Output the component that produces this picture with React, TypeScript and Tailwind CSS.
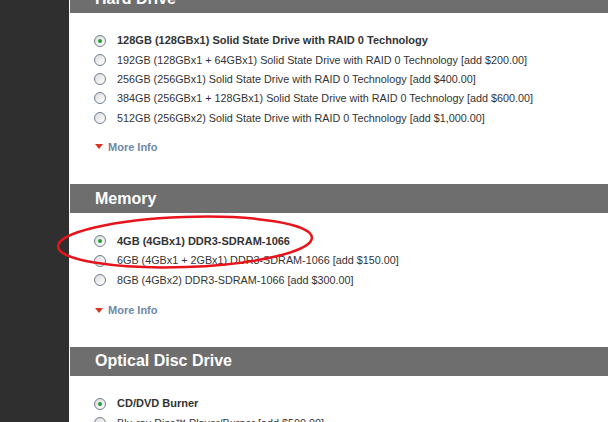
import React from 'react';

interface Option {
  label: string;
  selected?: boolean;
}

interface Section {
  title: string;
  options: Option[];
  moreInfo?: boolean;
}

const sections: Section[] = [
  {
    title: 'Hard Drive',
    moreInfo: true,
    options: [
      { label: '128GB (128GBx1) Solid State Drive with RAID 0 Technology', selected: true },
      { label: '192GB (128GBx1 + 64GBx1) Solid State Drive with RAID 0 Technology [add $200.00]' },
      { label: '256GB (256GBx1) Solid State Drive with RAID 0 Technology [add $400.00]' },
      { label: '384GB (256GBx1 + 128GBx1) Solid State Drive with RAID 0 Technology [add $600.00]' },
      { label: '512GB (256GBx2) Solid State Drive with RAID 0 Technology [add $1,000.00]' },
    ],
  },
  {
    title: 'Memory',
    moreInfo: true,
    options: [
      { label: '4GB (4GBx1) DDR3-SDRAM-1066', selected: true },
      { label: '6GB (4GBx1 + 2GBx1) DDR3-SDRAM-1066 [add $150.00]' },
      { label: '8GB (4GBx2) DDR3-SDRAM-1066 [add $300.00]' },
    ],
  },
  {
    title: 'Optical Disc Drive',
    options: [
      { label: 'CD/DVD Burner', selected: true },
      { label: 'Blu-ray Disc™ Player/Burner [add $500.00]' },
    ],
  },
];

function Radio({ checked }: { checked?: boolean }) {
  return (
    <span className="flex h-[12px] w-[12px] shrink-0 items-center justify-center rounded-full border border-[#6f7d8f] bg-gradient-to-br from-[#dcdcdc] to-white">
      {checked && <span className="h-[4px] w-[4px] rounded-full bg-[#22a032]" />}
    </span>
  );
}

function OptionGroup({ section, first }: { section: Section; first?: boolean }) {
  return (
    <div className={first ? 'mt-[-16px]' : ''}>
      <div className="flex h-[29px] items-center bg-[#6e6e6e] pl-[25px] text-[16px] font-bold text-white">
        {section.title}
      </div>
      <div className={`pl-[24px] pt-[18px] ${first ? 'pb-[28px]' : 'pb-[27px]'}`}>
        {section.options.map((opt) => (
          <div
            key={opt.label}
            className={`flex items-center gap-[11px] ${first ? 'h-[19.25px]' : 'h-[19.5px]'}`}
          >
            <Radio checked={opt.selected} />
            <span
              className={`whitespace-nowrap text-[#333] ${
                opt.selected ? 'text-[11px] font-bold' : 'text-[10.8px]'
              }`}
            >
              {opt.label}
            </span>
          </div>
        ))}
        {section.moreInfo && (
          <div className={`flex h-[19px] items-center gap-[5px] pl-[1px] ${first ? 'mt-[10px]' : 'mt-[11px]'}`}>
            <span className="h-0 w-0 border-x-[4px] border-t-[5px] border-x-transparent border-t-[#d9341f]" />
            <span className="text-[11px] font-bold text-[#6f87ab]">More Info</span>
          </div>
        )}
      </div>
    </div>
  );
}

export default function App() {
  return (
    <div
      className="relative flex h-[422px] w-[608px] overflow-hidden bg-white"
      style={{ fontFamily: '"Liberation Sans", Arial, sans-serif' }}
    >
      <div className="w-[69px] shrink-0 bg-[#2f2f2f]" />
      <div className="ml-[1px] flex-1">
        {sections.map((s, i) => (
          <OptionGroup key={s.title} section={s} first={i === 0} />
        ))}
      </div>
      <svg className="pointer-events-none absolute left-0 top-0" width="608" height="422">
        <ellipse
          cx="185"
          cy="242"
          rx="127"
          ry="25"
          fill="none"
          stroke="#e8141b"
          strokeWidth="2.5"
          transform="rotate(-2 185 242)"
        />
      </svg>
    </div>
  );
}
